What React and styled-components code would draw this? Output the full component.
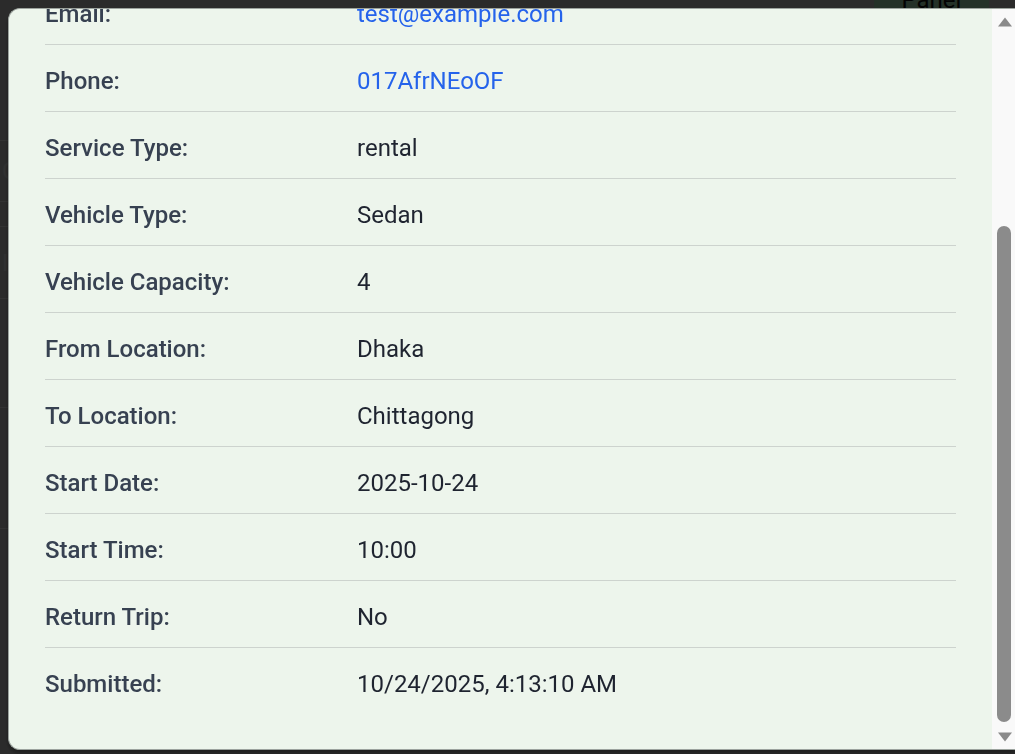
import React, { useLayoutEffect, useRef } from 'react';
import styled, { createGlobalStyle } from 'styled-components';

const GlobalStyle = createGlobalStyle`
  html, body {
    margin: 0;
    padding: 0;
    height: 100%;
    overflow: hidden;
    background: #d8d8d8;
    font-family: Roboto, "Liberation Sans", sans-serif;
  }
`;

const Page = styled.div`
  margin-top: -22px;
  background: #d8d8d8;
  min-height: 800px;
`;

const TopBar = styled.div`
  display: flex;
  justify-content: flex-end;
  padding: 0 26px 0 0;
`;

const PanelButton = styled.button`
  width: 115px;
  height: 44px;
  border: none;
  border-radius: 6px;
  background: #b2f4c6;
  color: #111;
  font-family: Roboto, sans-serif;
  font-size: 24px;
`;

const BackRow = styled.div`
  height: ${(p) => p.h}px;
  border-bottom: 1px solid #ffffff;
  color: #f2f2f2;
  font-size: 24px;
  display: flex;
  align-items: center;
  padding-left: 2px;
`;

const Overlay = styled.div`
  position: fixed;
  inset: 0;
  background: rgba(0, 0, 0, 0.8);
`;

const Modal = styled.div`
  position: fixed;
  top: 8px;
  left: 8px;
  right: 0;
  bottom: 4px;
  display: flex;
  box-sizing: border-box;
  background: #edf5ec;
  border: 1px solid #9ca39e;
  border-right: none;
  border-radius: 12px 0 0 12px;
  box-shadow: 0 3px 4px rgba(0, 0, 0, 0.35);
  overflow: hidden;
`;

const ScrollArea = styled.div`
  flex: 1;
  min-width: 0;
  overflow: hidden;
  padding: 36px 36px 35px 36px;
`;

const ScrollBar = styled.div`
  width: 23px;
  flex-shrink: 0;
  display: flex;
  flex-direction: column;
  background: #f9f9f9;
`;

const ArrowButton = styled.div`
  height: 23px;
  display: flex;
  align-items: ${(p) => (p.down ? 'flex-start' : 'flex-end')};
  justify-content: center;
  padding: ${(p) => (p.down ? '6px 1px 0 4px' : '0 1px 5px 4px')};
  box-sizing: border-box;
`;

const Track = styled.div`
  flex: 1;
  display: flex;
  flex-direction: column;
  justify-content: flex-end;
  padding: 0 4px 4px 5px;
`;

const Thumb = styled.div`
  height: 496px;
  border-radius: 7px;
  background: #8b8b8b;
`;

const Header = styled.div`
  padding-bottom: 30px;
  margin-bottom: 30px;
  border-bottom: 2px solid #cfd5d0;
`;

const TitleRow = styled.div`
  display: flex;
  justify-content: space-between;
  align-items: center;
  height: 56px;
  margin-bottom: 16px;
`;

const Title = styled.h2`
  margin: 0;
  font-size: 36px;
  font-weight: 700;
  color: #1f2937;
`;

const CloseButton = styled.button`
  border: none;
  background: none;
  font-size: 36px;
  color: #4b5563;
  cursor: pointer;
`;

const SubTitle = styled.div`
  font-size: 24px;
  line-height: 36px;
  color: #4b5563;
`;

const Row = styled.div`
  display: grid;
  grid-template-columns: 312px 1fr;
  padding: 18px 0 12px;
  line-height: 36px;
  font-size: 24px;
  border-bottom: 1px solid #cdd3ce;

  &:last-child {
    border-bottom: none;
  }
`;

const Label = styled.div`
  font-weight: 500;
  color: #374151;
`;

const Value = styled.div`
  color: #1f2430;
`;

const Link = styled.a`
  color: #2563eb;
  text-decoration: none;
`;

const details = [
  ['Name:', 'Test User'],
  ['Email:', 'test@example.com', 'mailto:test@example.com'],
  ['Phone:', '017AfrNEoOF', 'tel:017AfrNEoOF'],
  ['Service Type:', 'rental'],
  ['Vehicle Type:', 'Sedan'],
  ['Vehicle Capacity:', '4'],
  ['From Location:', 'Dhaka'],
  ['To Location:', 'Chittagong'],
  ['Start Date:', '2025-10-24'],
  ['Start Time:', '10:00'],
  ['Return Trip:', 'No'],
  ['Submitted:', '10/24/2025, 4:13:10 AM'],
];

const Arrow = ({ down }) => (
  <svg width="14" height="10" viewBox="0 0 14 10">
    <polygon
      points={down ? '0,0.5 14,0.5 7,9.5' : '0,9.5 14,9.5 7,0.5'}
      fill="#8a8a8a"
    />
  </svg>
);

export default function App() {
  const areaRef = useRef(null);

  useLayoutEffect(() => {
    if (areaRef.current) areaRef.current.scrollTop = areaRef.current.scrollHeight;
  }, []);

  return (
    <>
      <GlobalStyle />
      <Page>
        <TopBar>
          <PanelButton>Panel</PanelButton>
        </TopBar>
        <BackRow h={118} />
        <BackRow h={60}>C</BackRow>
        <BackRow h={24} />
        <BackRow h={71}>I</BackRow>
        <BackRow h={108} />
        <BackRow h={120} />
      </Page>
      <Overlay />
      <Modal>
        <ScrollArea ref={areaRef}>
          <Header>
            <TitleRow>
              <Title>Booking Details</Title>
              <CloseButton aria-label="Close">×</CloseButton>
            </TitleRow>
            <SubTitle>Request received from the website form</SubTitle>
          </Header>
          {details.map(([label, value, href]) => (
            <Row key={label}>
              <Label>{label}</Label>
              <Value>{href ? <Link href={href}>{value}</Link> : value}</Value>
            </Row>
          ))}
        </ScrollArea>
        <ScrollBar>
          <ArrowButton>
            <Arrow />
          </ArrowButton>
          <Track>
            <Thumb />
          </Track>
          <ArrowButton down>
            <Arrow down />
          </ArrowButton>
        </ScrollBar>
      </Modal>
    </>
  );
}
